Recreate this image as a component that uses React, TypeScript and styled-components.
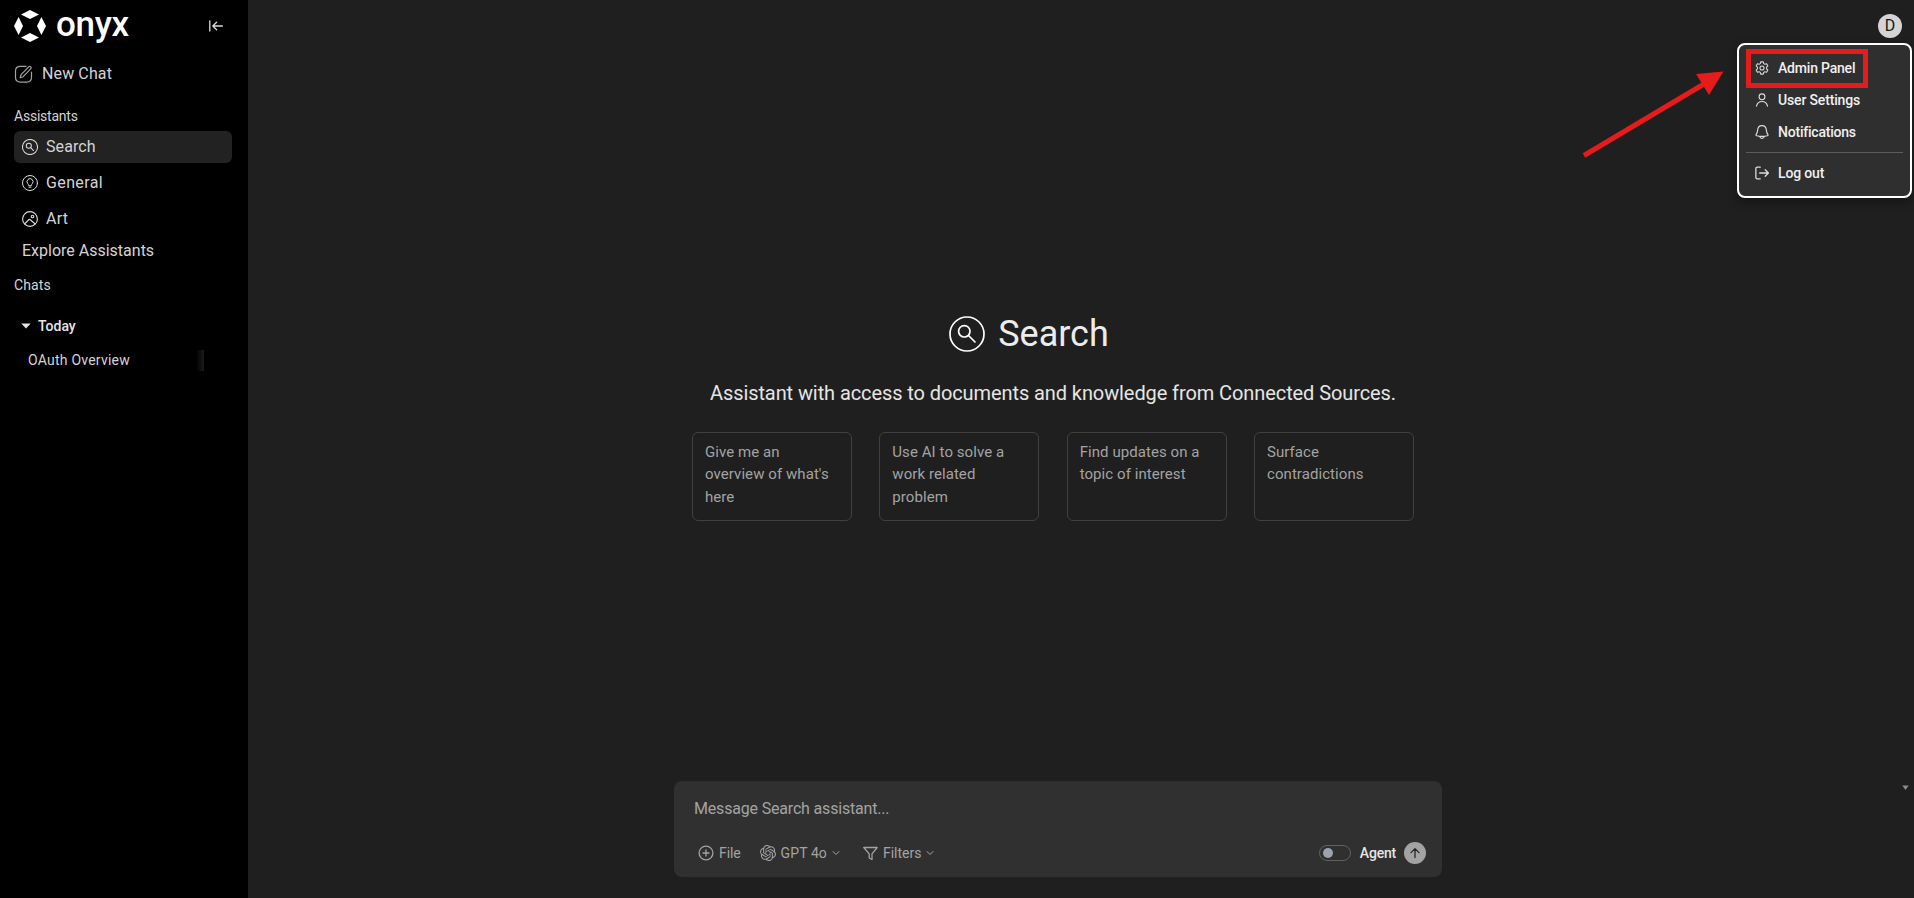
import React from "react";
import styled, { createGlobalStyle } from "styled-components";
import { SiOpenai } from "react-icons/si";

const GlobalStyle = createGlobalStyle`
  *, *::before, *::after { box-sizing: border-box; }
  html, body { margin: 0; padding: 0; background: #1f1f1f; overflow: hidden; }
  body { font-family: "Roboto", "Liberation Sans", sans-serif; color: #e5e5e5; }
`;

const Page = styled.div`
  position: relative;
  display: flex;
  height: 898px;
  background: #1f1f1f;
`;

const Sidebar = styled.aside`
  width: 248px;
  flex: none;
  display: flex;
  flex-direction: column;
  background: #000;
  padding: 9px 16px 0 14px;
`;

const SidebarHead = styled.div`
  height: 34px;
  display: flex;
  align-items: center;
  justify-content: space-between;
  padding-right: 9px;
`;

const Brand = styled.div`
  display: flex;
  align-items: center;
  gap: 10px;
`;

const Label = styled.span<{ $size?: number; $weight?: number; $track?: number; $color?: string; $lift?: number }>`
  font-size: ${(p) => p.$size ?? 14}px;
  font-weight: ${(p) => p.$weight ?? 400};
  letter-spacing: ${(p) => p.$track ?? 0}px;
  color: ${(p) => p.$color ?? "#d4d4d4"};
  padding-bottom: ${(p) => (p.$lift ?? 0) * 2}px;
  white-space: nowrap;
`;

const NewChat = styled.div`
  display: flex;
  align-items: center;
  gap: 9px;
  height: 20px;
  margin-top: 20px;
`;

const SectionTitle = styled.div<{ $top: number }>`
  height: 20px;
  line-height: 20px;
  margin-top: ${(p) => p.$top}px;
`;

const AssistantList = styled.div`
  display: flex;
  flex-direction: column;
  gap: 4px;
  margin-top: 5px;
`;

const AssistantRow = styled.div<{ $active?: boolean }>`
  display: flex;
  align-items: center;
  gap: 8px;
  height: 32px;
  padding-left: 8px;
  border-radius: 6px;
  background: ${(p) => (p.$active ? "#222222" : "transparent")};
`;

const Explore = styled.div`
  height: 24px;
  line-height: 24px;
  margin: 4px 0 0 8px;
`;

const GroupHead = styled.div`
  display: flex;
  align-items: center;
  gap: 7px;
  height: 20px;
  margin-top: 21px;
  padding-left: 7px;
`;

const ChatRow = styled.div`
  display: flex;
  align-items: center;
  justify-content: space-between;
  height: 21px;
  margin: 14px 28px 0 14px;
`;

const Fade = styled.div`
  width: 8px;
  height: 21px;
  background: linear-gradient(to right, #000, #1c1c1c);
`;

const Main = styled.main`
  flex: 1;
  display: flex;
  flex-direction: column;
  align-items: center;
  padding-top: 316px;
`;

const Hero = styled.div`
  display: flex;
  align-items: center;
  gap: 13px;
  height: 36px;
  margin-right: 104px;
`;

const Subtitle = styled.div`
  height: 28px;
  line-height: 28px;
  margin-top: 27px;
  margin-right: 56px;
`;

const Cards = styled.div`
  display: grid;
  grid-template-columns: repeat(4, 160px);
  justify-content: space-between;
  width: 722px;
  margin-top: 25px;
  margin-right: 56px;
`;

const Card = styled.div`
  height: 89px;
  padding: 7.9px 12px;
  border: 1px solid #404040;
  border-radius: 6px;
  font-size: 15px;
  line-height: 22.5px;
  letter-spacing: 0.07px;
  color: #a3a3a3;
  white-space: pre-line;
`;

const Composer = styled.div`
  width: 768px;
  height: 96px;
  margin-top: 260px;
  margin-right: 46px;
  border-radius: 8px;
  background: #303030;
  padding: 18px 16px 0 20px;
`;

const Placeholder = styled.div`
  height: 20px;
  line-height: 20px;
`;

const Tools = styled.div`
  display: flex;
  align-items: center;
  height: 24px;
  margin-top: 22px;
  padding-left: 4px;
`;

const Tool = styled.div<{ $gap: number; $after: number }>`
  display: flex;
  align-items: center;
  gap: ${(p) => p.$gap}px;
  margin-right: ${(p) => p.$after}px;
`;

const Spacer = styled.div`
  flex: 1;
`;

const Toggle = styled.div`
  display: flex;
  align-items: center;
  width: 32px;
  height: 16px;
  padding-left: 3px;
  border: 1px solid #606060;
  border-radius: 8px;
  margin-right: 9px;
`;

const Knob = styled.div`
  width: 10px;
  height: 10px;
  border-radius: 50%;
  background: #9ca3af;
`;

const Send = styled.div`
  display: flex;
  align-items: center;
  justify-content: center;
  width: 22px;
  height: 22px;
  border-radius: 50%;
  background: #a3a3a3;
  margin-left: 8px;
`;

const Avatar = styled.div`
  position: absolute;
  left: 1878px;
  top: 14px;
  width: 24px;
  height: 24px;
  border-radius: 50%;
  background: #d4d4d4;
  color: #171717;
  font-size: 16px;
  line-height: 24px;
  text-align: center;
`;

const Menu = styled.div`
  position: absolute;
  left: 1737px;
  top: 43px;
  width: 175px;
  height: 155px;
  padding: 7px;
  border: 2px solid #fff;
  border-radius: 8px;
  background: #2f2f2f;
  box-shadow: 0 4px 10px rgba(0, 0, 0, 0.35);
`;

const MenuItem = styled.div`
  display: flex;
  align-items: center;
  gap: 9px;
  height: 32px;
  padding-left: 9px;
`;

const Divider = styled.div`
  height: 1px;
  margin: 4px 0;
  background: #5c5c5c;
`;

const Highlight = styled.div`
  position: absolute;
  left: 1746px;
  top: 49px;
  width: 122px;
  height: 39px;
  border: 5px solid #e61b1b;
`;

const Arrow = styled.svg`
  position: absolute;
  left: 1576px;
  top: 64px;
`;

const ScrollMark = styled.svg`
  position: absolute;
  left: 1902px;
  top: 785px;
`;

const Glyph = styled.svg`
  flex: none;
`;

type IconProps = { size: number; box?: number; sw?: number; color?: string; children: React.ReactNode };

const Icon = ({ size, box = 24, sw = 1.5, color = "#dcdcdc", children }: IconProps) => (
  <Glyph width={size} height={size} viewBox={`0 0 ${box} ${box}`} fill="none" stroke={color} strokeWidth={sw} strokeLinecap="round" strokeLinejoin="round">
    {children}
  </Glyph>
);

const SearchCircle = ({ size, sw, color }: { size: number; sw: number; color?: string }) => (
  <Icon size={size} box={36} sw={sw} color={color}>
    <circle cx="18" cy="18" r="17" />
    <circle cx="15.3" cy="15.3" r="5.7" />
    <path d="M19.5 19.5L26 26" />
  </Icon>
);

const Chevron = () => (
  <Icon size={8} box={8} sw={1} color="#a3a3a3">
    <path d="M1 2.5L4 5.5L7 2.5" />
  </Icon>
);

const cards = ["Give me an\noverview of what's\nhere", "Use AI to solve a\nwork related\nproblem", "Find updates on a\ntopic of interest", "Surface\ncontradictions"];

export default function App() {
  return (
    <Page>
      <GlobalStyle />
      <Sidebar>
        <SidebarHead>
          <Brand>
            <svg width="32" height="32" viewBox="0 0 32 32" fill="#fff">
              <path d="M16 0L25 4.6L16 9L7 4.6ZM16 23L25 27.4L16 32L7 27.4ZM0 16L4.6 7L9 16L4.6 25ZM23 16L27.4 7L32 16L27.4 25Z" />
            </svg>
            <Label $size={35} $weight={500} $track={-0.3} $color="#fff" $lift={2}>onyx</Label>
          </Brand>
          <Icon size={14} box={14} sw={1.3}>
            <path d="M0.8 2v10M13.4 7H3.8M7.6 3.2L3.8 7l3.8 3.8" />
          </Icon>
        </SidebarHead>
        <NewChat>
          <Icon size={19} box={19} sw={1.2} color="#a3a3a3">
            <path d="M12 2.3H6.5Q1.5 2.3 1.5 7v6.300q0 4.800 5 4.800h6q5 0 5-4.800V8" />
            <path d="M6.200 13.700l.9-3.100L14.700 2.900q1-.9 2 0t0 2L9.200 12.700z" />
          </Icon>
          <Label $size={16} $track={0.12}>New Chat</Label>
        </NewChat>
        <SectionTitle $top={23}><Label $track={-0.23}>Assistants</Label></SectionTitle>
        <AssistantList>
          <AssistantRow $active>
            <SearchCircle size={16} sw={2.3} />
            <Label $size={16} $track={0.1} $lift={1}>Search</Label>
          </AssistantRow>
          <AssistantRow>
            <Icon size={16} box={16} sw={1}>
              <circle cx="8" cy="8" r="7.5" />
              <path d="M6.7 10.4Q6.5 9.3 5.7 8.6a3 3 0 1 1 4.6 0Q9.5 9.3 9.3 10.4zM7 12.2h2" />
            </Icon>
            <Label $size={16} $track={0.38} $lift={1}>General</Label>
          </AssistantRow>
          <AssistantRow>
            <Icon size={16} box={16} sw={1.1}>
              <circle cx="8" cy="8" r="7.4" />
              <circle cx="10.5" cy="5.5" r="1.3" />
              <path d="M2.5 13L7 8.5Q7.5 8 8 8.5L13.2 13" />
            </Icon>
            <Label $size={16} $track={0.2} $lift={1}>Art</Label>
          </AssistantRow>
        </AssistantList>
        <Explore><Label $size={16}>Explore Assistants</Label></Explore>
        <SectionTitle $top={12}><Label $track={0.12}>Chats</Label></SectionTitle>
        <GroupHead>
          <svg width="10" height="6" viewBox="0 0 10 6"><path d="M0.3 0.5h9.4L5 5.6z" fill="#e5e5e5" /></svg>
          <Label $weight={500} $color="#e5e5e5">Today</Label>
        </GroupHead>
        <ChatRow>
          <Label $track={0.23} $lift={0.5}>OAuth Overview</Label>
          <Fade />
        </ChatRow>
      </Sidebar>
      <Main>
        <Hero>
          <SearchCircle size={36} sw={1.7} color="#fff" />
          <Label $size={36} $color="#ececec">Search</Label>
        </Hero>
        <Subtitle><Label $size={20} $track={-0.09} $color="#e5e5e5">Assistant with access to documents and knowledge from Connected Sources.</Label></Subtitle>
        <Cards>
          {cards.map((c) => <Card key={c}>{c}</Card>)}
        </Cards>
        <Composer>
          <Placeholder><Label $size={16} $track={-0.18} $color="#a3a3a3">Message Search assistant...</Label></Placeholder>
          <Tools>
            <Tool $gap={5} $after={19}>
              <Icon size={16} box={16} sw={1.3} color="#a3a3a3">
                <circle cx="8" cy="8" r="6.9" />
                <path d="M8 5v6M5 8h6" />
              </Icon>
              <Label $track={-0.1} $color="#a3a3a3">File</Label>
            </Tool>
            <Tool $gap={5} $after={23}>
              <SiOpenai size={16} color="#a3a3a3" />
              <Label $track={0.1} $color="#a3a3a3">GPT 4o</Label>
              <Chevron />
            </Tool>
            <Tool $gap={5} $after={0}>
              <Icon size={15} box={15} sw={1.3} color="#a3a3a3">
                <path d="M0.8 1.5h13.4L9 7.8v5.7L6.2 12V7.8z" />
              </Icon>
              <Label $color="#a3a3a3">Filters</Label>
              <Chevron />
            </Tool>
            <Spacer />
            <Toggle><Knob /></Toggle>
            <Label $weight={500} $track={-0.2} $color="#e5e5e5">Agent</Label>
            <Send>
              <Icon size={12} box={12} sw={1.3} color="#262626"><path d="M6 10.5V1.8M2 5.6L6 1.6l4 4" /></Icon>
            </Send>
          </Tools>
        </Composer>
      </Main>
      <Avatar>D</Avatar>
      <Menu>
        <MenuItem>
          <Icon size={14} sw={1.8}>
            <path d="M9.8 1.5h4.4l.7 3 2 1.1 3-.9 2.2 3.8-2.3 2.1v2.8l2.3 2.1-2.2 3.8-3-.9-2 1.1-.7 3H9.8l-.7-3-2-1.1-3 .9-2.2-3.8 2.3-2.1v-2.8L1.9 8.5l2.2-3.8 3 .9 2-1.1z" />
            <circle cx="12" cy="12" r="3.5" />
          </Icon>
          <Label $weight={500} $track={-0.2} $color="#f0f0f0">Admin Panel</Label>
        </MenuItem>
        <MenuItem>
          <Icon size={14} sw={1.9}><circle cx="12" cy="6.5" r="5" /><path d="M2.5 22.5Q4.5 14.5 12 14.5T21.5 22.5" /></Icon>
          <Label $weight={500} $track={-0.16} $color="#f0f0f0">User Settings</Label>
        </MenuItem>
        <MenuItem>
          <Icon size={14} sw={2}><path d="M12 1Q5 1 4.500 9 4.300 13 2 16q-1 2 1 2.500 9 1.800 18 0 2-.5 1-2.500-2.300-3-2.500-7Q19 1 12 1zM8 20q1 3 4 3t4-3" /></Icon>
          <Label $weight={500} $track={-0.22} $color="#f0f0f0">Notifications</Label>
        </MenuItem>
        <Divider />
        <MenuItem>
          <Icon size={14} sw={2.2}><path d="M9 2H4Q1.500 2 1.500 4.500v15Q1.500 22 4 22H9M8 12H23M17.500 6.500L23 12l-5.500 5.500" /></Icon>
          <Label $weight={500} $track={-0.17} $color="#f0f0f0">Log out</Label>
        </MenuItem>
      </Menu>
      <Highlight />
      <Arrow width="152" height="98" viewBox="1576 64 152 98">
        <path d="M1584 155.5L1704 84" stroke="#e61b1b" strokeWidth="5" />
        <path d="M1723.5 71.5L1709 95L1696 74z" fill="#e61b1b" />
      </Arrow>
      <ScrollMark width="7" height="6" viewBox="0 0 7 6"><path d="M0.3 0.5h6.4L3.5 5z" fill="#8a8a8a" /></ScrollMark>
    </Page>
  );
}
